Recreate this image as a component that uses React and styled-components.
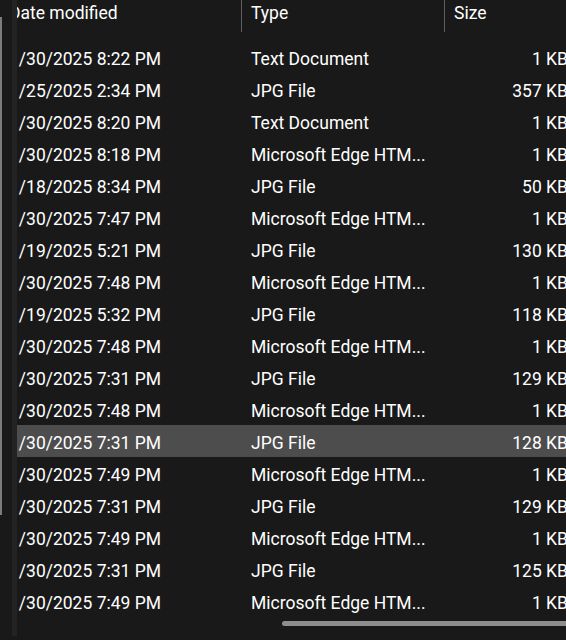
import React from "react";
import styled, { createGlobalStyle } from "styled-components";

const GlobalStyle = createGlobalStyle`
  html, body {
    margin: 0;
    padding: 0;
    background: #191919;
    overflow: hidden;
  }
`;

const Window = styled.div`
  width: 566px;
  height: 640px;
  display: flex;
  background: #191919;
  overflow: hidden;
  font-family: Roboto, "Noto Sans", sans-serif;
  font-size: 17.5px;
  color: #ffffff;
`;

const NavPane = styled.div`
  width: 12px;
  flex-shrink: 0;
`;

const NavThumb = styled.div`
  width: 2px;
  height: 498px;
  margin-top: 17px;
  background: #7c7c7c;
`;

const Splitter = styled.div`
  width: 5px;
  height: 636px;
  flex-shrink: 0;
  background: #232323;
`;

const Content = styled.div`
  position: relative;
  flex: 1;
  height: 636px;
  overflow: hidden;
`;

const Table = styled.div`
  width: 600px;
  margin-left: -18px;
`;

const Header = styled.div`
  display: grid;
  grid-template-columns: 242px 203px 136px;
  height: 32px;
`;

const HeaderCell = styled.div`
  padding-left: ${(p) => (p.$divider ? "9px" : "10px")};
  border-left: ${(p) => (p.$divider ? "1px solid #5f5f5f" : "none")};
  line-height: 26px;
  white-space: nowrap;
`;

const List = styled.div`
  padding-top: 9px;
`;

const Row = styled.div`
  display: grid;
  grid-template-columns: 242px 203px 136px;
  align-items: center;
  height: 32px;
  background: ${(p) => (p.$selected ? "#4d4d4d" : "transparent")};
`;

const Cell = styled.div`
  padding: ${(p) => (p.$right ? "4px 12px 0 0" : "4px 0 0 10px")};
  text-align: ${(p) => (p.$right ? "right" : "left")};
  white-space: nowrap;
  overflow: hidden;
`;

const HScrollThumb = styled.div`
  position: absolute;
  left: 265px;
  right: -10px;
  top: 621px;
  height: 5px;
  border-radius: 3px;
  background: #8e8e8e;
`;

const TXT = "Text Document";
const JPG = "JPG File";
const HTM = "Microsoft Edge HTM...";

const files = [
  ["1/30/2025 8:22 PM", TXT, "1 KB"],
  ["1/25/2025 2:34 PM", JPG, "357 KB"],
  ["1/30/2025 8:20 PM", TXT, "1 KB"],
  ["1/30/2025 8:18 PM", HTM, "1 KB"],
  ["1/18/2025 8:34 PM", JPG, "50 KB"],
  ["1/30/2025 7:47 PM", HTM, "1 KB"],
  ["1/19/2025 5:21 PM", JPG, "130 KB"],
  ["1/30/2025 7:48 PM", HTM, "1 KB"],
  ["1/19/2025 5:32 PM", JPG, "118 KB"],
  ["1/30/2025 7:48 PM", HTM, "1 KB"],
  ["1/30/2025 7:31 PM", JPG, "129 KB"],
  ["1/30/2025 7:48 PM", HTM, "1 KB"],
  ["1/30/2025 7:31 PM", JPG, "128 KB", true],
  ["1/30/2025 7:49 PM", HTM, "1 KB"],
  ["1/30/2025 7:31 PM", JPG, "129 KB"],
  ["1/30/2025 7:49 PM", HTM, "1 KB"],
  ["1/30/2025 7:31 PM", JPG, "125 KB"],
  ["1/30/2025 7:49 PM", HTM, "1 KB"],
];

export default function App() {
  return (
    <>
      <GlobalStyle />
      <Window>
        <NavPane>
          <NavThumb />
        </NavPane>
        <Splitter />
        <Content>
          <Table>
            <Header>
              <HeaderCell>Date modified</HeaderCell>
              <HeaderCell $divider>Type</HeaderCell>
              <HeaderCell $divider>Size</HeaderCell>
            </Header>
            <List>
              {files.map(([date, type, size, selected], i) => (
                <Row key={i} $selected={selected}>
                  <Cell>{date}</Cell>
                  <Cell>{type}</Cell>
                  <Cell $right>{size}</Cell>
                </Row>
              ))}
            </List>
          </Table>
          <HScrollThumb />
        </Content>
      </Window>
    </>
  );
}
